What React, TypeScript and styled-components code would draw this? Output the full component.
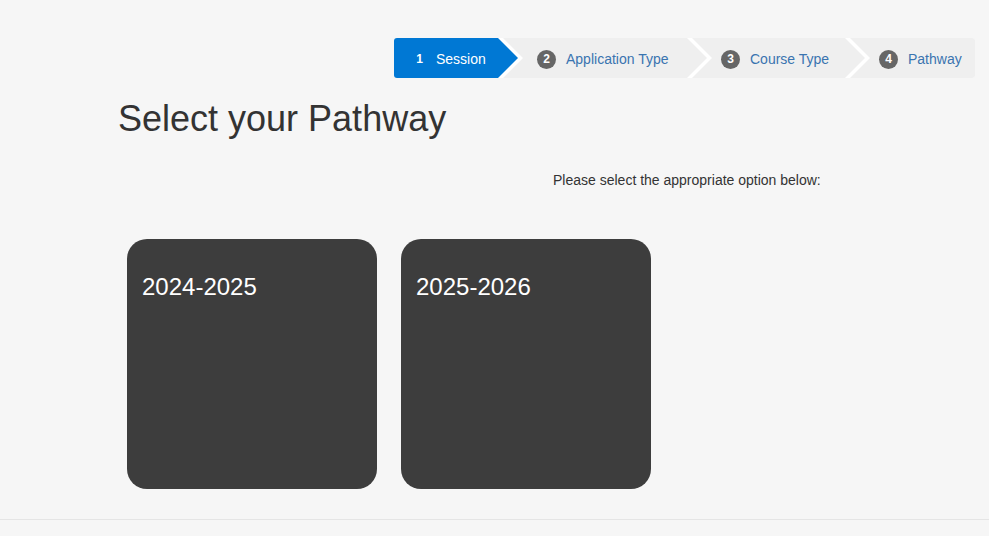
import React from "react";
import styled, { createGlobalStyle } from "styled-components";

const GlobalStyle = createGlobalStyle`
  html, body {
    margin: 0;
    padding: 0;
    background: #f6f6f6;
    font-family: "Liberation Sans", Arial, sans-serif;
    color: #333;
  }
`;

const Page = styled.div`
  min-height: 536px;
  background: #f6f6f6;
  display: flex;
  flex-direction: column;
`;

const Header = styled.div`
  display: flex;
  justify-content: flex-end;
  padding: 38px 14px 0 0;
`;

const Steps = styled.nav`
  display: flex;
  height: 40px;
  background: #ffffff;
  border-radius: 3px;
  overflow: hidden;
`;

const Step = styled.div<{ $active?: boolean; $first?: boolean; $last?: boolean; $width: number; $pad: number }>`
  box-sizing: border-box;
  width: ${(p) => p.$width}px;
  height: 40px;
  display: flex;
  align-items: center;
  gap: ${(p) => (p.$active ? 7 : 10)}px;
  padding-left: ${(p) => p.$pad}px;
  padding-top: 2px;
  margin-left: ${(p) => (p.$first ? 0 : -15)}px;
  background: ${(p) => (p.$active ? "#0078d4" : "#efefef")};
  color: ${(p) => (p.$active ? "#ffffff" : "#3a74b0")};
  font-size: 14px;
  clip-path: ${(p) =>
    p.$first
      ? "polygon(0 0, calc(100% - 20px) 0, 100% 50%, calc(100% - 20px) 100%, 0 100%)"
      : p.$last
      ? "polygon(0 0, 100% 0, 100% 100%, 0 100%, 20px 50%)"
      : "polygon(0 0, calc(100% - 20px) 0, 100% 50%, calc(100% - 20px) 100%, 0 100%, 20px 50%)"};
`;

const Num = styled.span<{ $plain?: boolean }>`
  display: inline-flex;
  align-items: center;
  justify-content: center;
  width: 19px;
  height: 19px;
  border-radius: 50%;
  background: ${(p) => (p.$plain ? "transparent" : "#666666")};
  color: #ffffff;
  font-size: 12px;
  font-weight: bold;
`;

const Title = styled.h1`
  margin: 21px 0 0 118px;
  font-size: 36px;
  font-weight: 500;
  line-height: 1.1;
  color: #333;
`;

const Instruction = styled.p`
  margin: 31px 0 0 553px;
  font-size: 14px;
  line-height: 20px;
  color: #333;
`;

const Cards = styled.div`
  display: flex;
  gap: 24px;
  margin: 49px 0 0 127px;
`;

const Card = styled.div`
  box-sizing: border-box;
  width: 250px;
  height: 250px;
  border-radius: 20px;
  background: #3d3d3d;
  color: #ffffff;
  padding: 35px 15px;
  font-size: 24px;
  line-height: 1.1;
  cursor: pointer;
`;

const Footer = styled.div`
  margin-top: 30px;
  border-top: 1px solid #e5e5e5;
  flex: 1;
`;

const steps = [
  { n: "1", label: "Session", width: 124, pad: 16 },
  { n: "2", label: "Application Type", width: 204, pad: 34 },
  { n: "3", label: "Course Type", width: 173, pad: 29 },
  { n: "4", label: "Pathway", width: 125, pad: 29 },
];

const sessions = ["2024-2025", "2025-2026"];

const App: React.FC = () => {
  return (
    <Page>
      <GlobalStyle />
      <Header>
        <Steps>
          {steps.map((s, i) => (
            <Step
              key={s.n}
              $active={i === 0}
              $first={i === 0}
              $last={i === steps.length - 1}
              $width={s.width}
              $pad={s.pad}
            >
              <Num $plain={i === 0}>{s.n}</Num>
              {s.label}
            </Step>
          ))}
        </Steps>
      </Header>
      <Title>Select your Pathway</Title>
      <Instruction>Please select the appropriate option below:</Instruction>
      <Cards>
        {sessions.map((s) => (
          <Card key={s}>{s}</Card>
        ))}
      </Cards>
      <Footer />
    </Page>
  );
};

export default App;
